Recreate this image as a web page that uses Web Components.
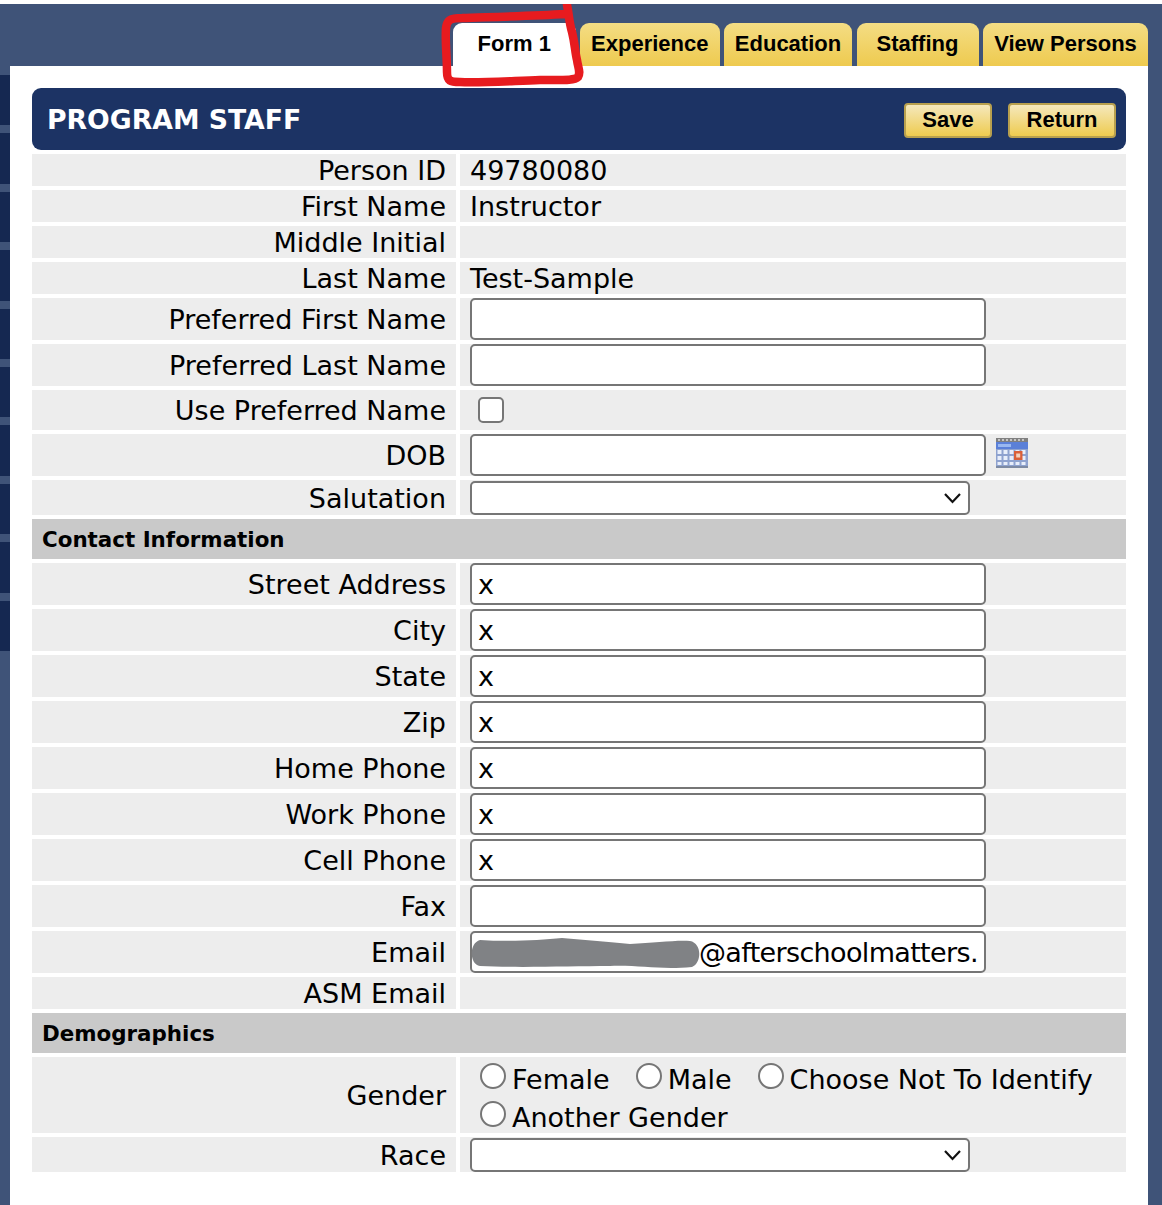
<!DOCTYPE html>
<html lang="en">
<head>
<meta charset="utf-8">
<title>Program Staff</title>
<style>
html,body{margin:0;padding:0;background:#fff;}
body{height:1205px;overflow:hidden;font-family:"DejaVu Sans",Verdana,sans-serif;color:#000;}
</style>
</head>
<body>
<staff-page>
  <tab-bar slot="tabs">
    <tab-item active width="122.5">Form 1</tab-item>
    <tab-item width="139.5">Experience</tab-item>
    <tab-item width="128">Education</tab-item>
    <tab-item width="122">Staffing</tab-item>
    <tab-item width="165">View Persons</tab-item>
  </tab-bar>
  <panel-header title="PROGRAM STAFF">
    <gold-button width="88">Save</gold-button>
    <gold-button width="108">Return</gold-button>
  </panel-header>
  <form-row label="Person ID">49780080</form-row>
  <form-row label="First Name">Instructor</form-row>
  <form-row label="Middle Initial"></form-row>
  <form-row label="Last Name">Test-Sample</form-row>
  <form-row label="Preferred First Name" flush><text-field></text-field></form-row>
  <form-row label="Preferred Last Name" flush><text-field></text-field></form-row>
  <form-row label="Use Preferred Name" tall><check-box></check-box></form-row>
  <form-row label="DOB" flush><text-field></text-field><calendar-icon></calendar-icon></form-row>
  <form-row label="Salutation" flush><select-field></select-field></form-row>
  <section-head>Contact Information</section-head>
  <form-row label="Street Address" flush><text-field>x</text-field></form-row>
  <form-row label="City" flush><text-field>x</text-field></form-row>
  <form-row label="State" flush><text-field>x</text-field></form-row>
  <form-row label="Zip" flush><text-field>x</text-field></form-row>
  <form-row label="Home Phone" flush><text-field>x</text-field></form-row>
  <form-row label="Work Phone" flush><text-field>x</text-field></form-row>
  <form-row label="Cell Phone" flush><text-field>x</text-field></form-row>
  <form-row label="Fax" flush><text-field></text-field></form-row>
  <form-row label="Email" flush><text-field redacted><span style="padding-left:221px;letter-spacing:-.65px">@afterschoolmatters.</span></text-field></form-row>
  <form-row label="ASM Email"></form-row>
  <section-head>Demographics</section-head>
  <form-row label="Gender" flush>
    <radio-group>
      <radio-option>Female</radio-option>
      <radio-option>Male</radio-option>
      <radio-option>Choose Not To Identify</radio-option>
      <radio-option>Another Gender</radio-option>
    </radio-group>
  </form-row>
  <form-row label="Race" flush><select-field></select-field></form-row>
</staff-page>
<script>
function define(name, css, html, setup){
  customElements.define(name, class extends HTMLElement{
    constructor(){
      super();
      const root=this.attachShadow({mode:"open"});
      root.innerHTML="<style>"+css+"</style>"+html;
    }
    connectedCallback(){ if(setup) setup(this,this.shadowRoot); }
  });
}

define("staff-page",`
  :host{display:block;margin-top:4px;height:1201px;background:#3f5378;position:relative;overflow:hidden;}
  .frame{display:grid;grid-template-columns:10px 1138px 14px;grid-template-rows:62px 1139px;}
  .tabs{grid-column:1 / -1;}
  .strip{padding-top:9px;}
  .bands{height:576px;background:repeating-linear-gradient(to bottom,#152851 0,#152851 50.4px,#3f5378 50.4px,#3f5378 58.4px);}
  .panel{background:#fff;padding:22px 22px 0;display:flex;flex-direction:column;gap:4px;}
  .mark{position:absolute;left:0;top:-4px;width:1162px;height:100px;pointer-events:none;}
`,`
  <div class="frame">
    <div class="tabs"><slot name="tabs"></slot></div>
    <div class="strip"><div class="bands"></div></div>
    <div class="panel"><slot></slot></div>
    <div></div>
  </div>
  <svg class="mark" viewBox="0 0 1162 100" aria-hidden="true">
    <path d="M567 5 C569 14 569 22 572 32 C575 44 575 52 577 60 C578 68 581 72 578 77 C574 81 562 80 540 80 C510 81 480 83 460 82 C450 82 447 81 447 72 C447 58 445 40 446 28 C447 20 450 18 462 18 C490 17 530 16 566 14" fill="none" stroke="#e71b1f" stroke-width="8.5" stroke-linecap="round" stroke-linejoin="round"/>
  </svg>
`);

define("tab-bar",`
  :host{display:flex;justify-content:flex-end;align-items:flex-end;height:62px;padding-right:14px;gap:4.5px;box-sizing:border-box;}
`,`<slot></slot>`);

define("tab-item",`
  :host{display:flex;align-items:center;justify-content:center;box-sizing:border-box;height:43px;padding-bottom:2px;border-radius:9px 9px 0 0;
    background:linear-gradient(to bottom,#f4dd84,#eeca4f);font:bold 22px "Liberation Sans",Arial,sans-serif;color:#000;}
  :host([active]){background:#fff;}
`,`<slot></slot>`,(el)=>{el.style.width=el.getAttribute("width")+"px";});

define("panel-header",`
  :host{display:flex;flex:none;align-items:center;height:62px;box-sizing:border-box;background:#1c3364;border-radius:9px;padding:0 10px 0 15px;gap:16px;}
  .t{flex:1;font:bold 26.7px "DejaVu Sans",Verdana,sans-serif;color:#fff;}
`,`<div class="t"></div><slot></slot>`,(el,r)=>{r.querySelector(".t").textContent=el.getAttribute("title");});

define("gold-button",`
  :host{display:flex;align-items:center;justify-content:center;box-sizing:border-box;height:35px;padding-bottom:2px;margin-top:3px;border:2px solid #b8a04e;border-radius:4px;
    background:linear-gradient(to bottom,#f5e8bc,#eecb4f);font:bold 22px "Liberation Sans",Arial,sans-serif;color:#000;}
`,`<slot></slot>`,(el)=>{el.style.width=el.getAttribute("width")+"px";});

define("form-row",`
  :host{display:grid;flex:none;grid-template-columns:424px 666px;gap:4px;font-size:27px;line-height:32px;}
  .l{background:#ededed;display:flex;align-items:center;justify-content:flex-end;padding-right:10px;}
  .l span,.txt{position:relative;top:1px;}
  .v{background:#ededed;display:flex;align-items:center;gap:10px;padding-left:10px;min-height:32px;}
  :host([tall]) .v{min-height:40px;padding-left:18px;}
`,`<div class="l"><span></span></div><div class="v"><span class="txt"><slot></slot></span></div>`,(el,r)=>{
  r.querySelector(".l span").textContent=el.getAttribute("label");
  r.querySelector(".txt").style.display=el.hasAttribute("flush")||el.hasAttribute("tall")?"contents":"";
});

define("section-head",`
  :host{display:flex;flex:none;align-items:center;height:40px;box-sizing:border-box;background:#c9c9c9;padding-left:10px;font:bold 21.4px "DejaVu Sans",Verdana,sans-serif;}
`,`<slot></slot>`);

define("text-field",`
  :host{display:block;position:relative;box-sizing:border-box;width:516px;height:42px;background:#fff;border:2px solid #767676;border-radius:5px;
    padding:2px 6px 0;font-size:27px;line-height:36px;white-space:nowrap;}
  svg{position:absolute;left:-2px;top:4px;width:232px;height:32px;}
`,`<slot></slot>`,(el,r)=>{
  if(el.hasAttribute("redacted") && !r.querySelector("svg")){
    r.innerHTML+=`<svg viewBox="0 0 232 32" aria-hidden="true"><path d="M10 3 C40 5 70 3 92 1 C115 3 140 5 160 7 C185 6 205 3 220 4 C232 6 232 26 222 30 C190 33 170 28 140 29 C100 29 50 31 10 29 C-1 27 -1 6 10 3Z" fill="#808285"/></svg>`;
  }
});

define("select-field",`
  :host{display:block;box-sizing:border-box;width:500px;height:34px;margin-top:1px;background:#fff;border:2px solid #767676;border-radius:5px;position:relative;}
  svg{position:absolute;right:6px;top:9px;width:19px;height:12px;}
`,`<svg viewBox="0 0 19 12" aria-hidden="true"><path d="M2 2 L9.5 10 L17 2" fill="none" stroke="#111" stroke-width="2.2"/></svg>`);

define("check-box",`
  :host{display:block;height:26px;}
  input{appearance:none;-webkit-appearance:none;display:block;box-sizing:border-box;width:26px;height:26px;margin:0;background:#fff;border:2px solid #767676;border-radius:5px;}
`,`<input type="checkbox" aria-label="Use Preferred Name">`);

define("radio-group",`
  :host{display:flex;flex-wrap:wrap;padding-left:10px;width:656px;box-sizing:border-box;}
`,`<slot></slot>`);

define("radio-option",`
  :host{display:flex;align-items:flex-start;height:38px;margin-right:26px;white-space:nowrap;}
  input{appearance:none;-webkit-appearance:none;box-sizing:border-box;width:26px;height:26px;margin:6px 6px 0 0;background:#fff;border:2px solid #767676;border-radius:50%;flex:none;}
  span{display:block;margin-top:7px;}
`,`<input type="radio" name="g" tabindex="-1"><span><slot></slot></span>`);

define("calendar-icon",`
  :host{display:block;width:32px;height:30px;margin-bottom:4px;}
  svg{display:block;width:32px;height:30px;filter:blur(.7px);}
`,`<svg viewBox="0 0 32 30" aria-hidden="true">
  <rect x="0" y="0" width="32" height="30" fill="#8ea2cf"/>
  <rect x="0" y="0" width="32" height="4" fill="#808080"/>
  <path d="M2 2h2M6 2h2M10 2h2M14 2h2M18 2h2M22 2h2M26 2h2" stroke="#dcdcdc" stroke-width="1.4"/>
  <rect x="0" y="4" width="32" height="7" fill="#5b80d8"/>
  <rect x="2" y="6" width="13" height="3" fill="#9ab8f0"/>
  <rect x="0" y="28" width="32" height="2" fill="#7d8aa3"/>
  <g fill="#e8eefa">
    <rect x="1.5" y="12" width="4" height="4"/><rect x="7.5" y="12" width="4" height="4"/><rect x="13.5" y="12" width="4" height="4"/><rect x="19.5" y="12" width="4" height="4"/><rect x="25.5" y="12" width="4" height="4"/>
    <rect x="1.5" y="18" width="4" height="4"/><rect x="7.5" y="18" width="4" height="4"/><rect x="13.5" y="18" width="4" height="4"/><rect x="25.5" y="18" width="4" height="4"/>
    <rect x="1.5" y="24" width="4" height="3"/><rect x="7.5" y="24" width="4" height="3"/><rect x="13.5" y="24" width="4" height="3"/><rect x="19.5" y="24" width="4" height="3"/><rect x="25.5" y="24" width="4" height="3"/>
  </g>
  <rect x="18" y="13" width="8.5" height="9" fill="#d9603a"/>
  <rect x="20.2" y="15.5" width="4" height="4" fill="#f3d2bc"/>
</svg>`);
</script>
</body>
</html>
